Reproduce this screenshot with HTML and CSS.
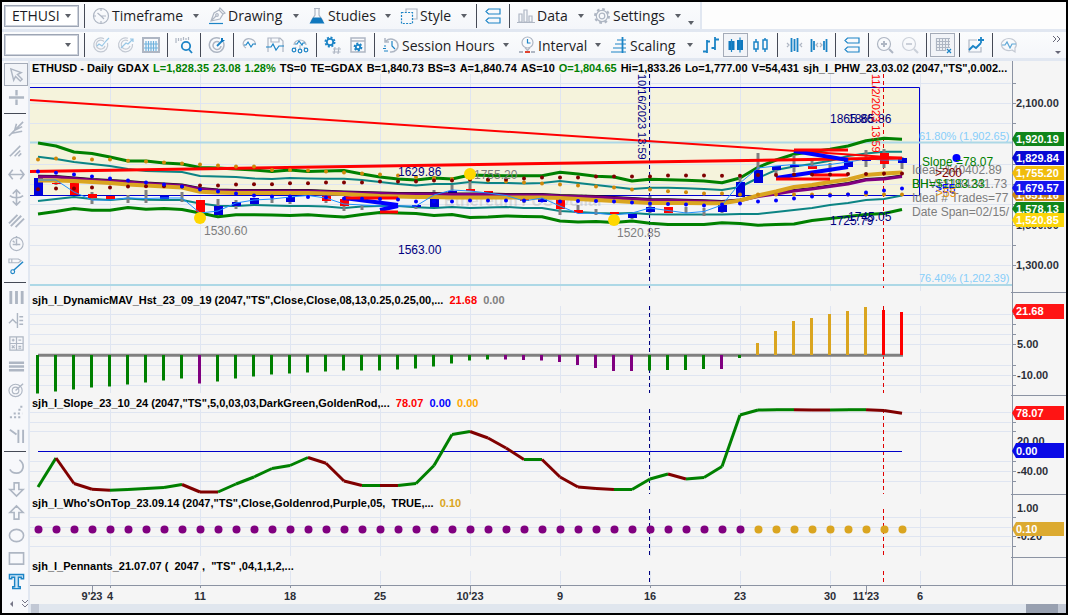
FILE: index.html
```html
<!DOCTYPE html>
<html lang="en">
<head>
<meta charset="utf-8">
<title>ETHUSD - Daily</title>
<link rel="stylesheet" href="styles.css">
</head>
<body>
<div class="window">
  <header class="bars">
    <div class="bar bar-menu">
      <div class="menu-panel">
        <span class="combo"><select aria-label="Symbol"><option>ETHUSI</option></select><i class="caret"></i></span>
        <i class="sep"></i>
        <button class="menu m-time"><svg class="ic" viewBox="0 0 18 18"><circle cx="9" cy="9" r="7.5"/><path d="M9 9L5.5 6M9 9h5M9 2v2M9 14v2M2 9h2M9 9l3 3"/></svg><span>Timeframe</span><i class="caret"></i></button>
        <button class="menu m-draw"><svg class="ic" viewBox="0 0 18 18"><path d="M3 14L6 6l5-3 4 4-3 5-9 2zM3 14l5-5M11 3l1-2 5 5-2 1"/><circle cx="9" cy="8" r="1.3"/><path class="b" d="M1 16.5h14"/></svg><span>Drawing</span><i class="caret"></i></button>
        <button class="menu m-stud"><svg class="ic" viewBox="0 0 18 18"><path d="M6 1.5h6M7 2v6L3 14M11 2v6l4 6"/><path class="bf" d="M5 10.5h8l3.5 6H1.500z"/></svg><span>Studies</span><i class="caret"></i></button>
        <button class="menu m-style"><svg class="ic" viewBox="0 0 18 18"><path d="M6 5V2h11v10h-4"/><path class="b" stroke-dasharray="2 1.300" d="M1.500 5.500h11v11h-11z"/></svg><span>Style</span><i class="caret"></i></button>
        <i class="sep"></i>
        <button class="tool" aria-label="Layout"><svg class="ic" viewBox="0 0 18 18"><path class="b" d="M4.500 2H16v5H4.500L2 4.500zM4.500 11H16v5H4.500L2 13.500z"/></svg></button>
        <i class="sep"></i>
        <button class="menu m-style"><svg class="ic" viewBox="0 0 18 18"><path d="M2 7h3v8H2zM7 3h3v12H7zM12 9h3v6h-3zM0 15.500h18"/></svg><span>Data</span><i class="caret"></i></button>
        <button class="menu m-set"><svg class="ic" viewBox="0 0 18 18"><circle cx="9" cy="9" r="2.800"/><circle cx="9" cy="9" r="5.700"/><circle cx="9" cy="9" r="7" stroke-width="2" stroke-dasharray="2.700 2.800"/></svg><span>Settings</span><i class="caret"></i></button>
        <i class="caret more"></i>
      </div>
    </div>
    <div class="bar bar-tools">
      <span class="combo small"><select aria-label="Template"><option></option></select><i class="caret"></i></span>
      <i class="sep"></i>
      <button class="tool" aria-label="Order entry"><svg class="ic pale" viewBox="0 0 18 18"><path d="M15.500 7A7 7 0 1 1 12 2.700M12 5.500A4.500 4.500 0 1 0 13 10"/><path class="b l" d="M5 10l2-2 3 2 4-5M14 5l3-3"/></svg></button>
      <button class="tool" aria-label="Strategy"><svg class="ic pale" viewBox="0 0 18 18"><path d="M15.500 8A7 7 0 1 1 11 2.300M11 4.700A4.500 4.500 0 1 0 13 10"/><path class="b l" d="M4 12l5-5 2 1 5-5M13 3h3v3"/></svg></button>
      <button class="tool" aria-label="Matrix"><svg class="ic" viewBox="0 0 18 18"><path stroke-width="2" d="M1 2h16v14H1z"/><path class="b l" d="M4 5v10M6.500 5v10M9 5v10M11.500 5v10M14 5v10M2 8h14M2 12h14"/></svg></button>
      <i class="sep"></i>
      <button class="tool" aria-label="Find bar"><svg class="ic" viewBox="0 0 18 18"><path d="M1 2v5M3.500 2v3M6 2v3M8.500 1v3M11 2v2M13.500 1v3"/><circle class="b w" cx="11" cy="10" r="4.200"/><path class="b w" d="M14 13.500l3 3.500"/></svg></button>
      <i class="sep"></i>
      <button class="tool" aria-label="Target"><svg class="ic" viewBox="0 0 18 18"><path stroke-width="1.500" d="M15.300 6A7.300 7.300 0 1 1 12 2.500M11 6a4 4 0 1 0 2 4"/><path class="b w" d="M9 10l5-5"/><path class="bf" d="M13 2h2v2h2l-2 2h-2z"/></svg></button>
      <i class="sep"></i>
      <button class="tool" aria-label="Insert study"><svg class="ic" viewBox="0 0 18 18"><path d="M5 12A6 5 0 1 1 14 9"/><path class="b" d="M3 9h2l2-3 3 5 2-3h3"/></svg></button>
      <button class="tool" aria-label="Save study"><svg class="ic" viewBox="0 0 18 18"><path d="M2 16V2h12l3 3v11M5 2v4h8V2"/><path class="b" d="M0 11h5l2-3 3 6 3-4h5"/></svg></button>
      <button class="tool" aria-label="Study group"><svg class="ic" viewBox="0 0 18 18"><path d="M3 9A6 5 0 1 1 15 9M5 11l-1 2M13 11l1 2M9 9v4"/><path class="b" d="M4 8h2l2-3 3 4 1-2h2"/><circle class="b" cx="3" cy="14" r="1.800"/><circle class="b" cx="9" cy="15" r="1.800"/><circle class="b" cx="15" cy="14" r="1.800"/></svg></button>
      <i class="sep"></i>
      <button class="tool" aria-label="Automate"><svg class="ic" viewBox="0 0 18 18"><circle class="b w" cx="6" cy="6" r="3.200"/><circle class="b w" cx="6" cy="6" r="4.600" stroke-dasharray="2 1.600"/><path d="M11 11l-1 7M15 11l-1 7M9 13h8M8.500 16h8"/></svg></button>
      <button class="tool" aria-label="Automation settings"><svg class="ic" viewBox="0 0 18 18"><path stroke-width="1.500" d="M2 2h14v14H2zM2 5h14"/><circle class="b w" cx="9" cy="11" r="2.200"/><circle class="b w" cx="9" cy="11" r="3.500" stroke-dasharray="2 1.600"/></svg></button>
      <i class="sep"></i>
      <button class="menu m-sess"><svg class="ic" viewBox="0 0 18 18"><path stroke-width="1.500" d="M3 2v4h4M4 5a7 6.500 0 1 1 4 11"/><path class="b" d="M10 5v5l3 3M2 10h2M1 12.500h3M2 15h4"/></svg><span>Session Hours</span><i class="caret"></i></button>
      <button class="menu m-int"><svg class="ic" viewBox="0 0 18 18"><circle cx="9.500" cy="6.500" r="5.500"/><path d="M7 11.500l2.500 3 2.500-3"/><path class="b" d="M9.500 3v4h3"/><path class="r" d="M7 16h5"/><path stroke-width="2" d="M1 16h4M13 16h4"/></svg><span>Interval</span><i class="caret"></i></button>
      <button class="menu m-int"><svg class="ic" viewBox="0 0 18 18"><path class="b w" d="M12.500 1v16"/><path class="b" d="M7 4h9M5 8h11M3 12h13M1 16h15"/></svg><span>Scaling</span><i class="caret"></i></button>
      <button class="tool" aria-label="Bars"><svg class="ic" viewBox="0 0 18 18"><path class="b w" d="M5 17V4M1 15.500h4M5 5.500h3M13 14V1M9.500 12H13M13 3.500h4"/></svg></button>
      <button class="tool on" aria-label="Candles"><svg class="ic" viewBox="0 0 18 18"><path class="bf" d="M1.500 5h6v9h-6zM10 4h6v10h-6z"/><path class="b" d="M4.500 3v13M13 1.500v15"/></svg></button>
      <button class="tool" aria-label="Hollow candles"><svg class="ic" viewBox="0 0 18 18"><path class="b" stroke-width="1.500" d="M2 6h4v7H2zM11 4h4v9h-4zM4 3v3M4 13v3M13 2v2M13 13v3"/></svg></button>
      <i class="sep"></i>
      <button class="tool" aria-label="Decrease spacing"><svg class="ic" viewBox="0 0 18 18"><path class="b w" d="M6.500 2v14M9.500 3v12M12.500 2v14"/><path d="M2 7l2 2-2 2M17 7l-2 2 2 2"/></svg></button>
      <button class="tool" aria-label="Increase spacing"><svg class="ic" viewBox="0 0 18 18"><path class="b w" d="M1.500 3v13M4 5v9M14 5v9M16.500 3v13"/><path d="M8 7L6 9l2 2M10 7l2 2-2 2"/></svg></button>
      <i class="sep"></i>
      <button class="tool" aria-label="Arrange"><svg class="ic" viewBox="0 0 18 18"><path class="b" d="M4.500 2H16v5H4.500L2 4.500zM4.500 11H16v5H4.500L2 13.500z"/></svg></button>
      <i class="sep"></i>
      <button class="tool" aria-label="Zoom in"><svg class="ic" viewBox="0 0 18 18"><circle cx="8" cy="8" r="6.500"/><path stroke-width="2" d="M5 8h6M8 5v6M13 13l4 4"/></svg></button>
      <button class="tool faint" aria-label="Zoom out"><svg class="ic" viewBox="0 0 18 18"><circle cx="8" cy="8" r="6.500"/><path stroke-width="2" d="M5 8h6M13 13l4 4"/></svg></button>
      <i class="sep"></i>
      <button class="tool on" aria-label="Grid"><svg class="ic" viewBox="0 0 18 18"><path d="M2 2.500h14M2 5.500h14M2 8.500h14M2 11.500h14M2 14.500h10M2.500 2v13M5.500 2v13M8.500 2v13M11.500 2v13M14.500 2v9"/><path class="b" d="M13 13l4 4M17 13l-4 4"/></svg></button>
      <i class="sep"></i>
      <button class="tool" aria-label="Add chart"><svg class="ic" viewBox="0 0 18 18"><path d="M10 4H2v12h12v-5"/><path class="b w" d="M2 14l4-4 3 2 5-5M14 1v6M11 4h6"/></svg></button>
      <i class="sep"></i>
      <button class="tool" aria-label="Chat"><svg class="ic pale" viewBox="0 0 18 18"><path d="M12 14a7.500 6 0 1 1 3-2v4z"/><path class="b" d="M2 9h3l2-3 3 6 2-4h4"/></svg></button>
      <span class="overflow"><svg width="12" height="26" viewBox="0 0 12 26"><path fill="none" stroke="#667" d="M2 4l3 3-3 3M6 4l3 3-3 3"/><path fill="#667" d="M4 19h6l-3 3z"/></svg></span>
    </div>
  </header>
  <main class="work">
    <nav class="side" aria-label="Drawing tools">
      <button class="on" aria-label="Pointer"><svg class="ic" viewBox="0 0 18 18"><path stroke-width="1.500" d="M3 3l11 4-4 2 5 5-2 2-5-5-2 4z"/></svg></button>
      <button aria-label="Crosshair"><svg class="ic" viewBox="0 0 18 18"><path stroke-width="2.500" d="M9 1v6M9 11v6M1 9h6M11 9h6M7 9h4"/></svg></button>
      <i class="rule"></i>
      <button aria-label="Fan"><svg class="ic" viewBox="0 0 18 18"><path stroke-width="1.700" d="M1 17L7 11 9 4M7 11l9-9M7 11l8-4M4 14l11-2"/></svg></button>
      <button aria-label="Lines"><svg class="ic" viewBox="0 0 18 18"><path stroke-width="1.700" d="M2 14L13 3M7 14l6-6M11 14l3-3"/></svg></button>
      <button aria-label="Horizontal"><svg class="ic" viewBox="0 0 18 18"><path stroke-width="1.700" d="M1 9h16M5 4L1 9l4 5M13 4l4 5-4 5"/></svg></button>
      <button aria-label="Vertical"><svg class="ic" viewBox="0 0 18 18"><path stroke-width="1.700" d="M9 2v14M5 5l4-4 4 4M5 13l4 4 4-4M2 7c3 3 11 3 14 0"/></svg></button>
      <button aria-label="Parallel"><svg class="ic" viewBox="0 0 18 18"><path stroke-width="2" d="M1 12l9-9M3 15L14 4M8 16l9-9"/></svg></button>
      <button aria-label="Gauge"><svg class="ic" viewBox="0 0 18 18"><circle cx="9" cy="9.500" r="7"/><path stroke-width="1.500" d="M9 4v7M5 10h8M9 1v2M5 6l2 2"/></svg></button>
      <button aria-label="Trendline"><svg class="ic" viewBox="0 0 18 18"><path d="M1 1h10l3 2-3 2H1zM4 1v4"/><path class="b" stroke-width="1.500" d="M6 13L16 4"/><circle class="b" cx="5" cy="14.500" r="2"/></svg></button>
      <i class="rule"></i>
      <button aria-label="Columns"><svg class="ic" viewBox="0 0 18 18"><path stroke-width="3" d="M3 2v14M9 2v14M15 2v14"/></svg></button>
      <button aria-label="Levels"><svg class="ic" viewBox="0 0 18 18"><path stroke-width="1.500" d="M1 12l4-4 4 4M10 1v16M12 5h4M12 9h4M12 13h4"/></svg></button>
      <button aria-label="Calculator"><svg class="ic" viewBox="0 0 18 18"><path stroke-width="1.300" d="M2 2h14v14H2zM9 2v14M2 9h14M4 5.500h3M5.500 4v3M11 5.500h3M4 11l3 3M7 11l-3 3M11 12h3M11 14h3"/></svg></button>
      <button aria-label="Rows"><svg class="ic" viewBox="0 0 18 18"><path stroke-width="2.500" d="M1 5h16M1 9h16M1 13h16"/></svg></button>
      <button aria-label="Arcs"><svg class="ic" viewBox="0 0 18 18"><ellipse cx="8" cy="10" rx="7" ry="6.500"/><circle cx="8" cy="10" r="3.500"/><path stroke-width="1.500" d="M8 10l8-7"/></svg></button>
      <button aria-label="Dots"><svg class="ic" viewBox="0 0 18 18"><path stroke-width="2.200" stroke-dasharray="2.200 2.200" d="M2 14h12M6 10h9M11 6h3M13 3h3"/></svg></button>
      <button aria-label="Angle"><svg class="ic" viewBox="0 0 18 18"><path stroke-width="2" d="M2 3l7 5M11 3v14M16 3v14"/></svg></button>
      <i class="rule"></i>
      <button aria-label="Arc"><svg class="ic" viewBox="0 0 18 18"><path stroke-width="1.800" d="M12 2C19 7 16 16 9 16 6 16 3 14 2 12"/></svg></button>
      <button aria-label="Down arrow"><svg class="ic" viewBox="0 0 18 18"><path stroke-width="1.700" d="M6.500 2h5v7H16l-7 7-7-7h4.500z"/></svg></button>
      <button aria-label="Up arrow"><svg class="ic" viewBox="0 0 18 18"><path stroke-width="1.700" d="M6.500 16h5V9H16L9 2 2 9h4.500z"/></svg></button>
      <button aria-label="Ellipse"><svg class="ic" viewBox="0 0 18 18"><ellipse stroke-width="1.700" cx="9" cy="9" rx="7.500" ry="6.500"/></svg></button>
      <button aria-label="Rectangle"><svg class="ic" viewBox="0 0 18 18"><path stroke-width="1.700" d="M1.500 3h15v12h-15z"/></svg></button>
      <button aria-label="Text"><svg class="ic" viewBox="0 0 18 18"><path class="b" stroke-width="1.500" fill="#cfe6f6" d="M1.500 1.500h15V6h-2.500V4.500h-3v10H13v2H5v-2h2v-10H4V6H1.500z"/></svg></button>
      <svg class="side-end" viewBox="0 0 26 12"><path fill="#778" d="M9 3v6L6 6z"/><path fill="none" stroke="#778" d="M18 2l3 3 3-3M18 6l3 3 3-3"/></svg>
    </nav>
    <div class="chart">
      <section class="pane">
        <h2 class="head quote"><span>ETHUSD - Daily</span><span>GDAX</span><span class="up">L=1,828.35</span><span class="up">23.08</span><span class="up">1.28%</span><span>TS=0</span><span>TE=GDAX</span><span>B=1,840.73</span><span>BS=3</span><span>A=1,840.74</span><span>AS=10</span><span class="up">O=1,804.65</span><span>Hi=1,833.26</span><span>Lo=1,777.00</span><span>V=54,431</span><span>sjh_I_PHW_23.03.02 (2047,"TS",0.002...</span></h2>
        <svg class="plot" viewBox="30 77 1036 215">
          <rect x="30" y="87.500" width="890" height="108" fill="#f5f3dc"/>
          <g id="grid1"></g>
          <text class="mark" x="444" y="206">Ethereum / US Dollar</text>
          <path class="box" d="M30 87.500H919.500V195.500H30"/>
          <path class="fib" d="M30 142.500H1012M30 285H1012"/>
          <g id="price"></g>
          <g class="n">
            <text x="398" y="176">1629.86</text><text x="398" y="254">1563.00</text>
            <text x="830" y="123">1865.86</text><text x="848" y="123">1865.86</text>
            <text x="830" y="225">1725.79</text><text x="848" y="221">1745.05</text>
          </g>
          <g class="g">
            <text x="474" y="179">1755.20</text><text x="204" y="235">1530.60</text><text x="617" y="237">1520.85</text>
            <text x="912" y="174">Ideal=$40402.89</text><text x="912" y="188">BHV=$184241.73</text>
            <text x="912" y="202">Ideal # Trades=77</text><text x="912" y="216">Date Span=02/15/</text>
          </g>
          <g class="f"><text x="919" y="140">61.80% (1,902.65)</text><text x="919" y="282">76.40% (1,202.39)</text></g>
          <circle cx="956.500" cy="158" r="4" fill="#00f"/>
          <text class="up" x="922" y="166">Slope =78.07</text><text class="up" x="912" y="188">BH=$1183.33</text>
          <text class="maroon" x="935" y="177">&gt;200</text><text class="blue" x="935" y="193">&gt;55</text><text class="orange" x="936" y="197">&gt;55</text>
          <text class="vt navy" transform="translate(638 74) rotate(90)">10/16/2023 13:59</text>
          <text class="vt red" transform="translate(872 74) rotate(90)">11/2/2023 13:59</text>
          <g class="ax">
            <text x="1016" y="107">2,100.00</text><text x="1016" y="229">1,500.00</text><text x="1016" y="269">1,300.00</text>
          </g>
          <g class="tag">
            <path fill="#10851a" d="M1012 139l4-7h48v14h-48z"/><text x="1016" y="143">1,920.19</text>
            <path fill="#0808d4" d="M1012 158l4-7h48v14h-48z"/><text x="1016" y="162">1,829.84</text>
            <path fill="#cc8a16" d="M1012 195l4-7h48v13h-48z"/><text x="1016" y="199">1,651.16</text>
            <path fill="#f0bc0c" d="M1012 173l4-7h48v14h-48z"/><text x="1016" y="177">1,755.20</text>
            <path fill="#1414ee" d="M1012 188l4-7h48v14h-48z"/><text x="1016" y="192">1,679.57</text>
            <path fill="#10851a" d="M1012 209l4-7h48v12h-48z"/><text x="1016" y="213">1,578.13</text>
            <path fill="#fbd50a" d="M1012 220l4-7h48v14h-48z"/><text x="1016" y="224">1,520.85</text>
          </g>
        </svg>
      </section>
      <section class="pane">
        <h2 class="head">sjh_I_DynamicMAV_Hst_23_09_19 (2047,"TS",Close,Close,08,13,0.25,0.25,00,...  <span class="red">21.68</span>  <span class="grey">0.00</span></h2>
        <svg class="plot" viewBox="30 308 1036 87">
          <g id="grid2"></g><g id="hist"></g>
          <g class="ax"><text x="1017" y="348">5.00</text><text x="1017" y="379">-10.00</text></g>
          <g class="tag"><path fill="#ff1414" d="M1012 311l4-7h48v15h-48z"/><text x="1016" y="315">21.68</text></g>
        </svg>
      </section>
      <section class="pane">
        <h2 class="head">sjh_I_Slope_23_10_24 (2047,"TS",5,0,03,03,DarkGreen,GoldenRod,...  <span class="red">78.07</span>  <span class="blue">0.00</span>  <span class="orange">0.00</span></h2>
        <svg class="plot" viewBox="30 411 1036 84">
          <g id="grid3"></g><g id="slope"></g>
          <g class="ax"><text x="1017" y="445">20.00</text><text x="1017" y="475">-40.00</text></g>
          <g class="tag"><path fill="#ff1414" d="M1012 413l4-7h48v14h-48z"/><text x="1016" y="417">78.07</text>
          <path fill="#0a0ae6" d="M1012 451l4-8h48v15h-48z"/><text x="1016" y="455">0.00</text></g>
        </svg>
      </section>
      <section class="pane">
        <h2 class="head">sjh_I_Who'sOnTop_23.09.14 (2047,"TS",Close,Goldenrod,Purple,05,  TRUE,...  <span class="gold">0.10</span></h2>
        <svg class="plot" viewBox="30 511 1036 47">
          <g id="grid4"></g><g id="top"></g>
          <g class="ax"><text x="1017" y="512">1.00</text><text x="1017" y="540">-0.20</text></g>
          <g class="tag"><path fill="#dcaa30" d="M1012 529l4-7h48v14h-48z"/><text x="1016" y="533">0.10</text></g>
        </svg>
      </section>
      <section class="pane">
        <h2 class="head">sjh_I_Pennants_21.07.07 (  2047 ,  "TS" ,04,1,1,2,...</h2>
        <svg class="plot" viewBox="30 574 1036 11"><g id="grid5"></g></svg>
      </section>
      <svg class="plot" viewBox="30 585 1036 19">
        <path class="axis" d="M30 585.500H1066M92.500 585v8M110.500 585v3M200.500 585v3M290.500 585v3M380.500 585v3M470.500 585v8M560.500 585v3M650.500 585v3M740.500 585v3M830.500 585v3M866.500 585v8M920.500 585v3"/>
        <g class="ax mid"><text x="92" y="600">9'23</text><text x="110" y="600">4</text><text x="200" y="600">11</text><text x="290" y="600">18</text><text x="380" y="600">25</text><text x="470" y="600">10'23</text><text x="560" y="600">9</text><text x="650" y="600">16</text><text x="740" y="600">23</text><text x="830" y="600">30</text><text x="866" y="600">11'23</text><text x="920" y="600">6</text></g>
      </svg>
      <div class="scroll"><i class="end"></i><i class="thumb"></i><i class="end"></i></div>
    </div>
  </main>
</div>
<script src="chart.js"></script>
</body>
</html>
```
FILE: styles.css
```css
* { box-sizing: border-box; }
body { margin: 0; background: #000; font-family: "Liberation Sans", Arial, sans-serif; }
.window { border: 2px solid #000; background: #f5f5f5; overflow: hidden; }
button, select { font: inherit; color: inherit; }
button { border: 0; background: none; padding: 0; }

.bars { font-family: "Open Sans", "Noto Sans", sans-serif; font-size: 14px; color: #1c1c24; }
.bar { display: flex; align-items: center; border-bottom: 3px solid #e1e7f1; }
.bar-menu { height: 30px; background: #fdfdfd; }
.bar-tools { height: 29px; padding-left: 2px; background: linear-gradient(#fbfcfd, #f4f6fa); }
.menu-panel { display: flex; align-items: center; height: 27px; padding: 0 2px; background: linear-gradient(#fbfcfd, #f4f6fa); border-right: 2px solid #e1e7f1; }
.combo { display: flex; align-items: center; width: 75px; height: 22px; margin-right: 1px; padding-right: 7px; border: 1px solid #9da5b4; outline: 1px solid #cdd2db; outline-offset: -2px; background: #fff; flex: none; }
.combo select { appearance: none; border: 0; outline: 0; background: none; width: 100%; height: 20px; padding: 0 0 0 7px; min-width: 0; line-height: 20px; }
.sep { flex: none; width: 1px; height: 24px; margin: 0 3px 0 4px; background: #454a56; }
.caret { flex: none; width: 0; height: 0; border: 3px solid transparent; border-top: 4px solid #5c6068; border-bottom: 0; }
.more { margin: 14px 4px 0 2px; }
.menu { display: flex; align-items: center; height: 24px; padding: 0 5px 0 4px; white-space: nowrap; flex: none; }
.menu span { flex: 1; text-align: left; padding-left: 2px; }
.m-time { width: 116px; }
.m-draw { width: 100px; }
.m-stud, .m-int { width: 92px; }
.m-style { width: 76px; }
.m-set { width: 97px; }
.m-sess { width: 136px; }
.tool { display: flex; align-items: center; justify-content: center; flex: none; width: 25px; height: 24px; }
.on { border: 1px solid #a4abb8; background: #f2f4f8; }
.faint { opacity: .6; }
.overflow { margin-left: auto; padding-right: 3px; display: flex; }

.ic { width: 18px; height: 18px; flex: none; fill: none; stroke: #aeb6c3; stroke-width: 1.2; }
.ic .b { stroke: #1c84c6; }
.ic .l { stroke: #6fb2dd; }
.ic .w { stroke-width: 1.8; }
.ic .bf { fill: #1078be; stroke: none; }
.ic .r { stroke: #e2432f; stroke-width: 2; }
.pale { opacity: .7; }

.work { display: flex; align-items: flex-start; }
.side { flex: none; width: 28px; padding: 2px 2px 0; border-right: 2px solid #e1e7f1; display: flex; flex-direction: column; align-self: stretch; background: #f7f8fb; }
.side button { display: flex; align-items: center; justify-content: center; height: 23px; width: 24px; }
.side .ic { width: 17px; height: 17px; }
.rule { height: 1px; margin: 4px 0 3px; background: #454a56; }
.side-end { width: 26px; height: 12px; margin-top: 5px; }

.chart { flex: 1; min-width: 0; }
.head { margin: 0; height: 16px; padding-left: 2px; font-size: 11px; line-height: 16px; font-weight: bold; white-space: pre; color: #000; }
.quote { display: flex; gap: 4px; line-height: 15px; }
.plot { display: block; width: 100%; height: auto; overflow: visible; font-size: 12px; }
.up { color: #008000; fill: #008000; }
.red { color: #f00; fill: #f00; }
.blue { color: #00f; fill: #00f; }
.grey { color: #808080; }
.orange { color: #ffa500; fill: #e8960c; }
.gold { color: #daa520; }
.maroon { fill: #800000; }
.navy, .n { fill: #000080; }
.g { fill: #7d7d7d; }
.f { fill: #87cefa; font-size: 11px; }
.vt { font-size: 11px; }
.mark { font-size: 16px; font-weight: bold; fill: #999; fill-opacity: .3; }
.ax { font-size: 11px; font-weight: bold; fill: #2c2f38; }
.mid { text-anchor: middle; }
.tag { font-size: 11px; font-weight: bold; fill: #fff; }
.axis { fill: none; stroke: #8b93a3; }
.grid { fill: none; stroke: #dfe5f1; }
.box { fill: none; stroke: #0000d0; }
.fib { fill: none; stroke: #add8e6; stroke-width: 2; }
.scroll { display: flex; height: 9px; background: #e0e6ee; padding-left: 1px; }
.scroll .end { width: 8px; background: #c2c8d4; }
.scroll .thumb { width: 32px; margin-left: auto; background: #98a0b0; }
```
FILE: chart.js
```javascript
const X = i => 38 + 18 * i;
const put = (id, html) => { document.getElementById(id).innerHTML += html; };
const line = (pts, color, w) =>
  `<polyline fill="none" stroke="${color}" stroke-width="${w}" stroke-linejoin="round" points="${pts.map(p => p.join()).join(' ')}"/>`;
const seg = (x1, y1, x2, y2, color, w) => line([[x1, y1], [x2, y2]], color, w);
const series = (ys, color, w) => line(ys.map((y, i) => [X(i), y]), color, w);
const dots = (ys, color, r) => ys.map((y, i) => `<circle cx="${X(i)}" cy="${y}" r="${r}" fill="${color}"/>`).join('');

// Grid, cursor lines and value axis of one pane.
function grid(id, ys, top, bottom, paneTop, paneBottom) {
  let d = '', t = `M1012.5 ${paneTop}V${paneBottom}M1011 ${paneBottom + .5}H1066`;
  for (const y of ys) { d += `M30 ${y + .5}H1011`; t += `M1013 ${y + .5}h3`; }
  for (let x = 110; x <= 920; x += 90) d += `M${x + .5} ${top}V${bottom}`;
  put(id, `<path class="grid" d="${d}"/><path class="axis" d="${t}"/>` +
    `<path stroke="#000080" stroke-dasharray="4 3" d="M649.5 ${top}V${bottom}"/>` +
    `<path stroke="#e00000" stroke-dasharray="4 3" d="M883.5 ${top}V${bottom}"/>`);
}
grid('grid1', [83, 103, 123, 164, 184, 204, 225, 245, 265], 74, 291, 61, 292);
grid('grid2', [314, 324, 334, 344, 365, 375, 385], 306, 393, 292, 395);
grid('grid3', [412, 422, 431, 461, 471, 481], 409, 494, 395, 494);
grid('grid4', [517, 527, 536, 546], 509, 556, 494, 557);
grid('grid5', [], 571, 584, 557, 585);

const upper = [143,146,152,153.5,157,161,161,163,164,167.5,168,169,170,171.5,170,171.5,171,170.5,174,177,179,180,178,179,175,175.5,175.7,175.7,175.7,172.3,174,176.3,177,181,179.3,179.7,180.3,181,182.7,178,167.3,160,154.3,151.7,149.3,146,140.7,138.3,139.3];
const tealUp = [156.7,159,162,164,166,169,171,171.5,172,176,176.5,177,178.5,179,178,178.5,178.7,178.7,180,182,184,185.5,184,184,182,183,183,183.5,183,181,183,185,187,189,187.7,187.7,188.3,189,190,187,178,170,166.5,164,160.7,156,153.5,151.7,151.7];
const purple = [176.7,177,178.5,180,181,182,183.5,184.5,185.5,189,190.5,191,191,191,191,191,191.7,192.5,193,193.5,194,194,194,194.5,194.5,194.5,195,195,195,196,196.5,197,198,199,200,200.3,200.7,201.3,202,200.5,196.5,194,191,189,186.5,184,180,179,176.5];
const gold = [180.5,180.5,181,182,183,184.5,185.5,186.5,187.5,191.7,192.5,193,193,193,193,193,193.5,194,195,196,196.5,197,197,197.5,197.5,197.5,197.5,197.5,197.5,198,199,200,201,202,203,203,203,203.3,203.3,200.5,195.5,191.5,187,185,182,179.5,175,173.5,172.5];
const tealLow = [201,199,197,199,200,198.5,199.7,200,200,203.5,205.7,206,205,205.5,206,206,206.5,208,206.5,206,206,207.3,208,207,208,207.5,207,208,208,211,212,213,213.5,213,214.3,214.5,214.5,214.5,214.5,214,214,212,210,208,205,203,200,199,195.5];
const lower = [214,211.5,208.5,210.3,210.3,207.5,209.3,208.5,209.5,213,216.7,214.7,214.7,215,215.5,214.7,216,217,214.5,212.5,213,213.5,215.5,214.5,217.5,217,216,216.5,216.7,221,222,221.5,222.5,221,223.3,224.5,224.5,224.5,222.7,223.5,225.3,224.5,224,220.5,218.5,216.5,214.5,213.5,209.5];
const close = [180,180,192,200,200,198,198.5,198,198,213,211,203,200,199,197,195.5,198,204,205,206,206,206,195,190,191,193,195.5,201,198,206,213.5,213,215,213,208,210.5,213,211.5,205,183,168,166,164.5,166,164.5,162,159,160,160];
const oDots = [159.5,158.5,158.3,159.5,159.5,160.7,161.5,162.5,163.5,164.5,165.5,166.5,166.5,170,170,170.5,171.5,172.5,173.5,174.5,175.5,177,178,179,179.5,180.5,181.5,182.5,183.5,184.5,185.5,186.5,187.5,189.5,189.5,191.3,192.3,193.5,193.5,194.5,194.5,194.5,194.5,194.5,194.5,194.5,194.5,194.5,194.5];
const rDots = [189.3,188.5,188.5,187.5,187.5,186.5,186.3,186.3,186.5,185.5,185.5,184.5,184.3,184.3,183.3,183.3,182.5,182.5,182.5,181.5,181.5,181.5,180.5,180.5,179.5,179.5,179.5,178.5,177.5,177.5,177.5,176.5,176.5,176.5,176.5,175.5,175.5,175.5,175.7,175.7,175,175,174.5,174.5,174.5,174,174,173.5,173.5];
const bDots = [171.5,172.7,174.5,176.5,178.5,180.5,182.5,184.5,186.5,189.5,191.5,193.5,195.5,196.5,196.5,197,197.5,198.5,198.7,199,199.5,201.5,201.5,201.5,200.5,200.5,200.5,200.5,200.5,201.5,201,201,201.5,202.5,203.5,204,204.5,205.5,204.5,203.5,201.5,200.5,198.5,196.5,195.5,194.5,192.5,190.5,188.5];
// [bar, wick top, wick bottom, body top, body bottom, rising]
const candles = [[0,178,195,178,195,1],[1,180,185,183,184,0],[2,183,195,183,195,0],[3,192,204,194,198,0],[4,196,199,196,199,0],[5,195,203],[6,190,203],[7,195,199,195,199,1],[8,192,202],[9,200,212,200,212,0],[10,199,215,206,215,1],[11,200,209,202,206,1],[12,198,204,198,204,1],[13,196,203],[14,197,204,197,202,1],[16,196,203,196,201,0],[17,199,211,199,206,0],[18,205,210],[21,205,209,205,207,1],[22,190,207,198,207,1],[23,185,194,191,194,1],[24,182,191,189,191,0],[25,191,193,191,193,0],[26,193,195,193,195,0],[27,198,203,198,201,0],[28,193,202,197,202,1],[29,198,215,198,209,0],[30,205,213,210,213,0],[31,209,215],[32,212,215,212,214,0],[33,214,219,214,218,1],[34,196,213,207,212,1],[35,207,213,207,213,0],[36,207,213],[37,208,216],[38,205,213,205,212,1],[39,176,197,182,197,1],[40,153,183,170,183,1],[41,166,174,166,170,1],[42,155,172,165,167,1],[43,160,169,166,169,0],[44,163,172],[45,160,167,161,167,1],[46,150,167,158,161,1],[47,149,168,153,164,0],[48,157,169,158,163,1]];

put('price',
  series(upper, '#008000', 3) + series(lower, '#008000', 3) +
  series(tealUp, '#0c8484', 2) + series(tealLow, '#0c8484', 2) +
  candles.map(([i, a, b, c, d, up]) => seg(X(i), a, X(i), b, '#808080', 3) +
    (c ? `<rect x="${X(i) - 4}" y="${c}" width="9" height="${d - c}" fill="${up ? '#0000dc' : '#f00'}"/>` : '')).join('') +
  series(purple.map(y => y - 1), '#111', 2) + series(purple, '#800080', 3) + series(gold, '#daa520', 4) +
  series(close, '#1e90ff', 1) +
  seg(30, 100, 902, 158, '#f00', 2) + seg(30, 171.5, 902, 158, '#f00', 3) +
  seg(344, 198, 398, 205, '#00f', 4) + seg(380, 210, 398, 206, '#00f', 4) +
  seg(344, 198, 398, 198, '#f00', 3) + seg(380, 212, 398, 212, '#f00', 3) +
  seg(794, 151, 848, 160, '#00f', 4) + seg(776, 178, 848, 167, '#00f', 4) +
  seg(794, 150, 848, 150, '#f00', 3) + seg(776, 179, 830, 179, '#f00', 3) + seg(812, 175, 848, 175, '#f00', 3) +
  dots(oDots, '#d08808', 2) + dots(rDots, '#800000', 2) + dots(bDots, '#00f', 2) +
  [[200, 218], [470, 174], [614, 220]].map(([x, y]) => `<circle cx="${x}" cy="${y}" r="6" fill="#ffd700"/>`).join(''));

const bars = [393.5,391.5,389.5,387.5,386.5,384.5,382.5,380.5,378.5,383.5,381.5,378.5,376.5,374.5,373.5,372.5,371.5,370.5,370.5,370.5,369.5,368.5,366.5,363.5,360.5,359.5,359.5,360,360.5,362,365,368,371,371,370.5,370,370,369,369,358,343,331,321,318,314,311,307,310,312];
const purpleBars = [9, 26, 27, 28, 29, 30, 31, 32, 33, 38];
put('hist', seg(38, 355.3, 903, 355.3, '#808080', 3) + bars.map((y, i) =>
  seg(X(i) - .5, 355, X(i) - .5, y, i > 46 ? '#f00' : i > 39 ? '#daa520' : purpleBars.includes(i) ? '#800080' : '#008000', 3)).join(''));

const slope = [487,458,483.5,489.3,490.3,489.5,488.5,487.5,484.5,492,492,484,477,468.5,465.5,457.5,463.3,481,485.5,485.5,485.5,483.5,465.5,434.5,431.5,438,448,459.5,459.5,477,487,488.5,489.5,489.5,479,474,479,477.5,466.5,415,410,409.7,409.7,410,410,409.7,409.7,410.5,413.3];
const falling = new Set([1,2,3,8,9,15,16,17,19,24,25,26,28,29,30,31,35,42,43,46,47]);
put('slope', seg(38, 451.5, 902, 451.5, '#0000c8', 1) + slope.slice(1).map((y, i) =>
  seg(X(i), slope[i], X(i + 1), y, falling.has(i) ? '#800000' : '#008000', 3)).join(''));

put('top', bars.map((_, i) => `<circle cx="${X(i) + .5}" cy="529.4" r="4" fill="${i > 39 ? '#daa520' : '#800080'}"/>`).join(''));
```
